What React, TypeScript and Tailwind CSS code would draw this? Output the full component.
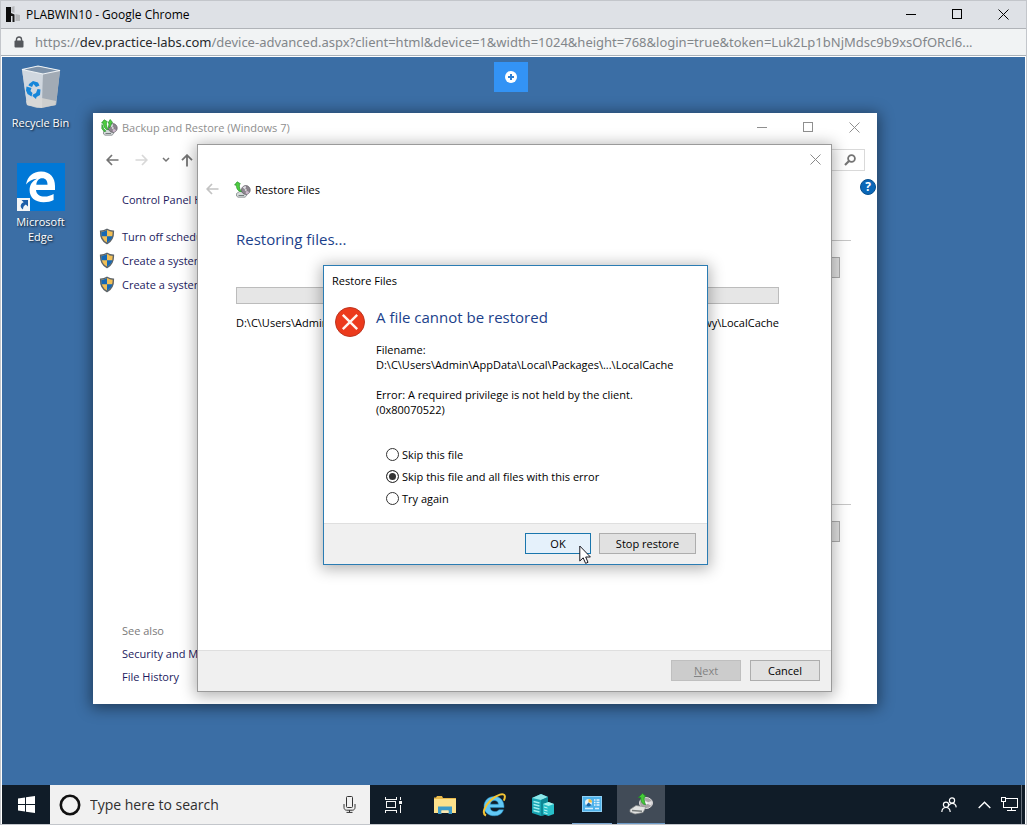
import React, { useState } from 'react';

type IconProps = { className?: string };

const MinimizeIcon = ({ className }: IconProps) => (
  <svg className={className} width="11" height="11" viewBox="0 0 11 11" stroke="currentColor" fill="none" shapeRendering="crispEdges">
    <path d="M0 5.5H10" />
  </svg>
);

const MaximizeIcon = ({ className }: IconProps) => (
  <svg className={className} width="11" height="11" viewBox="0 0 11 11" stroke="currentColor" fill="none" shapeRendering="crispEdges">
    <rect x="0.5" y="0.5" width="9" height="9" />
  </svg>
);

const CloseIcon = ({ className }: IconProps) => (
  <svg className={className} width="11" height="11" viewBox="0 0 11 11" stroke="currentColor" fill="none">
    <path d="M0.5 0.5L10.5 10.5M10.5 0.5L0.5 10.5" />
  </svg>
);

const ArrowLeft = ({ className }: IconProps) => (
  <svg className={className} width="13" height="12" viewBox="0 0 13 12" stroke="currentColor" strokeWidth="1.7" fill="none">
    <path d="M12.5 6H1.5M6 1L1.2 6L6 11" />
  </svg>
);

const ShieldIcon = () => (
  <svg width="16" height="17" viewBox="0 0 16 17" className="shrink-0">
    <path d="M8 1.3C6 2.7 3.8 3.2 1.6 3.2C1.4 9 3 13 8 15.5C13 13 14.6 9 14.4 3.2C12.2 3.2 10 2.7 8 1.3Z" fill="#f2bf55" stroke="#5d6368" strokeWidth="1.4" />
    <path d="M8 2.1C6.2 3.3 4.2 3.8 2.3 3.9C2.2 5.5 2.3 6.9 2.6 8.3H8Z" fill="#1668b5" />
    <path d="M8 8.3V14.7C11.2 13 12.8 11.1 13.4 8.3Z" fill="#1668b5" />
  </svg>
);

// hard disk + disc with a green restore arrow on top
const BackupIcon = ({ double, className }: IconProps & { double?: boolean }) => (
  <svg className={className} width="17" height="17" viewBox="0 0 17 17">
    <path d="M2.5 12.5L5.5 10.5H13.5L12.5 14.8L11 16.2H4L2.5 15Z" fill="#d5dada" stroke="#81888a" strokeWidth="0.8" />
    <circle cx="11.8" cy="9" r="4.4" fill="#8d868f" stroke="#5d5961" strokeWidth="0.7" />
    <path d="M11.8 9L8.6 6.4A4.1 4.1 0 0 1 11.8 4.9Z" fill="#e2dfe8" />
    <path d="M11.8 9L15.2 11.2A4.1 4.1 0 0 1 11.8 13.1Z" fill="#cdb9cd" />
    <circle cx="11.8" cy="9" r="1.2" fill="#fff" stroke="#686268" strokeWidth="0.5" />
    <path d="M4.5 14.5H10" stroke="#737b7c" />
    <path d="M0.6 4L3.2 0.8L6.4 2.8L5.4 3.6C5.3 6.4 5.8 8.6 7.4 10.6C4.4 10.6 2.5 8 2.3 4.2Z" fill="#4fcd3f" stroke="#23922b" strokeWidth="0.7" />
    {double && (
      <path d="M7 4L9.2 0.5L11.6 3.5L10.5 3.8C10.4 5.6 9.6 7.4 8.2 8.8C7.4 8 7.8 6.2 8 4.2ZM1 5.5L2.8 9.8L4.8 12.3L3.2 12.6L0.8 9.5Z" fill="#4fcd3f" stroke="#23922b" strokeWidth="0.7" />
    )}
  </svg>
);

const RecycleBinIcon = () => (
  <svg width="40" height="44" viewBox="0 0 40 44">
    <path d="M1 4.5L18 1L39 5.5L35 40L16 43L6 40Z" fill="#b7c1cb" />
    <path d="M1 4.5L22 9L21 43L6 40Z" fill="#d0d7df" />
    <path d="M22 9L39 5.5L35 40L21 43Z" fill="#a2abb5" />
    <path d="M1 4.5L17 1L39 5.5L22 9Z" fill="#7d92a9" stroke="#eef2f5" strokeWidth="1.2" />
    <path d="M5 36L16 32L35 36L34.5 40L20 43L6 40Z" fill="#dad8d5" opacity="0.8" />
    <g fill="#1686d9">
      <path d="M8 19L12 16L17 17.5L18.5 20.5L15 22L12.5 19L11 22L7.5 20.5Z" />
      <path d="M5.5 21.5L10.5 23L9.5 26L11.5 28L10.5 31.5L6.5 29L5 25.5Z" />
      <path d="M12 29.5L15 28L16.5 24L19.5 24.5L19 30L15.5 32L15 34L11.5 31Z" />
    </g>
  </svg>
);

const EdgeIcon = () => (
  <svg width="48" height="48" viewBox="0 0 48 48">
    <rect width="48" height="48" fill="#0078d7" />
    <path d="M9 21.5C10.5 13.5 16 8.5 24 8.5C33.5 8.5 38 15 38 23V27H19C19.3 31.6 23 33.6 27.4 33.6C31 33.6 34 32.5 36.6 31V37C33.8 38.5 30.6 39.2 26.6 39.2C18 39.2 12.6 34.5 12.6 27C12.6 22 15.3 18 20 15.8C15.4 16.2 11.6 18.3 9 21.5ZM19.3 21.7H30.5C30.5 17.6 28.8 15.2 25.2 15.2C21.8 15.2 19.7 17.8 19.3 21.7Z" fill="#fff" />
    <rect x="0" y="35" width="13" height="13" fill="#f3f5f7" />
    <path d="M4.5 37H11V43.5L8.8 41.4C6.8 42.6 6 44 6 46.5C2.4 43.8 3.4 40.6 6.7 39.2Z" fill="#1d5ea8" />
  </svg>
);

function WindowButtons() {
  return (
    <div className="flex self-stretch">
      <button aria-label="Minimize" className="w-[46px] flex items-center justify-center"><MinimizeIcon /></button>
      <button aria-label="Maximize" className="w-[46px] flex items-center justify-center"><MaximizeIcon /></button>
      <button aria-label="Close" className="w-[46px] flex items-center justify-center"><CloseIcon /></button>
    </div>
  );
}

const tasks = ['Turn off schedule', 'Create a system image', 'Create a system repair disc'];

function BackupWindow() {
  return (
    <section className="absolute left-[91px] top-[56px] w-[784px] h-[591px] bg-white flex flex-col shadow-[0_2px_14px_2px_rgba(0,0,0,0.45)]">
      <div className="h-7 flex items-center pl-2 text-[#8f8f8f]">
        <BackupIcon double />
        <span className="ml-1 flex-1">Backup and Restore (Windows 7)</span>
        <WindowButtons />
      </div>
      <div className="h-[38px] flex items-center pl-[13px] pr-3 text-[#747474]">
        <button aria-label="Back"><ArrowLeft /></button>
        <button aria-label="Forward" className="ml-4 text-[#d8d8d8]"><ArrowLeft className="rotate-180" /></button>
        <button aria-label="Recent locations" className="ml-3.5">
          <svg width="8" height="6" viewBox="0 0 8 6" fill="none" stroke="currentColor" strokeWidth="1.5"><path d="M1 1L4 4L7 1" /></svg>
        </button>
        <button aria-label="Up" className="ml-[11px]">
          <svg width="12" height="13" viewBox="0 0 12 13" fill="none" stroke="currentColor" strokeWidth="1.8"><path d="M6 12.5V1.5M1 6.2L6 1.2L11 6.2" /></svg>
        </button>
        <div className="ml-auto w-[180px] h-[22px] border border-[#d9d9d9] flex items-center justify-end pr-2">
          <svg width="12" height="12" viewBox="0 0 12 12" fill="none" stroke="currentColor"><circle cx="7.5" cy="4.5" r="3.4" strokeWidth="1.8" /><path d="M5 7L1 11" strokeWidth="2.2" /></svg>
        </div>
      </div>
      <div className="flex-1 flex">
        <nav className="w-[200px] pt-[9px] pb-4 flex flex-col text-[#1c1a5e] whitespace-nowrap">
          <a href="#home" className="pl-[29px] leading-6">Control Panel Home</a>
          <ul className="mt-3">
            {tasks.map((task) => (
              <li key={task} className="h-6 flex items-center pl-1.5">
                <ShieldIcon />
                <a href="#task" className="ml-[7px]">{task}</a>
              </li>
            ))}
          </ul>
          <div className="mt-auto pl-[29px] leading-[23px] flex flex-col">
            <span className="text-[#7a7a7a]">See also</span>
            <a href="#security">Security and Maintenance</a>
            <a href="#history">File History</a>
          </div>
        </nav>
        <div className="flex-1 flex flex-col">
          <button aria-label="Help" className="self-end mr-px w-4 h-4 rounded-full bg-[#0a67b8] border border-[#08508f] text-white text-xs font-bold flex items-center justify-center">
            ?
          </button>
          <div className="mt-[45px] mr-[26px] border-t border-[#c6c6c6]" />
          <button aria-label="Back up now" className="self-end mt-4 mr-[37px] w-[100px] h-[21px] bg-[#e1e1e1] border border-[#adadad]" />
          <div className="mt-[226px] mr-[26px] border-t border-[#c6c6c6]" />
          <button aria-label="Restore my files" className="self-end mt-4 mr-[37px] w-[100px] h-[21px] bg-[#e1e1e1] border border-[#adadad]" />
        </div>
      </div>
    </section>
  );
}

function RestoreWindow() {
  return (
    <section className="absolute left-[195px] top-[87px] w-[635px] h-[548px] bg-white border border-[#9a9a9a] flex flex-col shadow-[0_2px_14px_2px_rgba(0,0,0,0.3)]">
      <div className="flex justify-end h-7">
        <button aria-label="Close" className="w-[31px] flex items-center justify-center text-[#8a8a8a]"><CloseIcon /></button>
      </div>
      <div className="h-8 flex items-center pl-2">
        <button aria-label="Back" className="text-[#c3c3c3]"><ArrowLeft /></button>
        <BackupIcon className="ml-[15px]" />
        <span className="ml-1">Restore Files</span>
      </div>
      <div className="flex-1 pl-[38px] pr-[52px] pt-[22px]">
        <h1 className="text-[15px] leading-6 text-[#1b3f8b]">Restoring files...</h1>
        <div className="mt-9 h-[17px] bg-[#e6e6e6] border border-[#bcbcbc]" role="progressbar" />
        <p className="mt-[11px] flex justify-between whitespace-nowrap">
          <span>D:\C\Users\Admin\AppData</span>
          <span>cw5n1h2txyewy\LocalCache</span>
        </p>
      </div>
      <div className="h-[41px] pb-0.5 bg-[#f0f0f0] border-t border-[#dfdfdf] flex items-center justify-end gap-[9px] pr-[11px]">
        <button disabled className="w-[70px] h-[21px] bg-[#cccccc] border border-[#bfbfbf] text-[#838383]"><u>N</u>ext</button>
        <button className="w-[70px] h-[21px] bg-[#e1e1e1] border border-[#adadad]">Cancel</button>
      </div>
    </section>
  );
}

const options = [
  { id: 'skip', label: 'Skip this file' },
  { id: 'skip-all', label: 'Skip this file and all files with this error' },
  { id: 'retry', label: 'Try again' },
];

function ErrorDialog() {
  const [choice, setChoice] = useState('skip-all');

  return (
    <section className="absolute left-[321px] top-[208px] w-[385px] h-[300px] bg-white border border-[#2b7cb3] flex flex-col shadow-[0_2px_14px_2px_rgba(0,0,0,0.3)]">
      <div className="pl-2 h-7 flex items-center">Restore Files</div>
      <div className="flex-1 flex pl-[11px]">
        <svg width="30" height="30" viewBox="0 0 30 30" className="mt-[13px] shrink-0">
          <circle cx="15" cy="15" r="14.5" fill="#ec3a1c" stroke="#bd3520" />
          <path d="M7.8 7.8L22.2 22.2M22.2 7.8L7.8 22.2" stroke="#fff4ef" strokeWidth="2.4" />
        </svg>
        <div className="ml-[11px] pt-[11px]">
          <h2 className="text-[15px] leading-6 text-[#1b3f8b]">A file cannot be restored</h2>
          <p className="mt-[13px] leading-[15px]">
            Filename:<br />
            D:\C\Users\Admin\AppData\Local\Packages\...\LocalCache
          </p>
          <p className="mt-[15px] leading-[15px]">
            Error: A required privilege is not held by the client.<br />
            (0x80070522)
          </p>
          <div className="mt-[26px] ml-2.5 flex flex-col">
            {options.map((option) => (
              <label key={option.id} className="h-[22px] flex items-center gap-[3px]">
                <input
                  type="radio"
                  name="action"
                  checked={choice === option.id}
                  onChange={() => setChoice(option.id)}
                  className="appearance-none w-[13px] h-[13px] rounded-full border border-[#333333] bg-white checked:bg-[#333333] checked:shadow-[inset_0_0_0_2px_white]"
                />
                {option.label}
              </label>
            ))}
          </div>
        </div>
      </div>
      <div className="h-[41px] pb-0.5 bg-[#f0f0f0] border-t border-[#dfdfdf] flex items-center justify-end gap-2 pr-[11px]">
        <button className="w-[66px] h-[21px] bg-[#e5f1fb] border border-[#1a76ad]">OK</button>
        <button className="w-[97px] h-[21px] bg-[#e1e1e1] border border-[#adadad]">Stop restore</button>
      </div>
      <svg width="13" height="20" viewBox="0 0 13 20" className="absolute left-[255px] top-[279px]">
        <path d="M0.8 1V16L4.2 12.8L6.6 18.4L9 17.3L6.7 12H11.4Z" fill="#fff" stroke="#16161f" />
      </svg>
    </section>
  );
}

function Taskbar() {
  return (
    <footer className="h-[39px] shrink-0 bg-[#101c28] flex items-stretch">
      <button aria-label="Start" className="w-12 flex items-center justify-center">
        <svg width="17" height="17" viewBox="0 0 17 17" fill="#fff">
          <path d="M0 2.4L7 1.4V8H0ZM8 1.2L17 0V8H8ZM0 9H7V15.6L0 14.6ZM8 9H17V17L8 15.8Z" />
        </svg>
      </button>
      <label className="w-80 bg-[#f1f1f1] flex items-center pl-2 pr-3.5">
        <svg width="24" height="24" viewBox="0 0 24 24" className="shrink-0">
          <circle cx="12" cy="12" r="9.2" fill="none" stroke="#101010" strokeWidth="2.6" />
        </svg>
        <input
          type="text"
          aria-label="Search"
          placeholder="Type here to search"
          className="ml-2 flex-1 min-w-0 bg-transparent text-sm outline-none placeholder:text-[#2f2f2f]"
        />
        <svg width="13" height="17" viewBox="0 0 13 17" fill="none" stroke="#333">
          <rect x="3.5" y="0.5" width="6" height="11" rx="1" />
          <path d="M1 8V11.5C1 13 2 14.2 3.6 14.2H9.4C11 14.2 12 13 12 11.5V8M6.5 14.2V16.4M3.5 16.4H9.5" />
        </svg>
      </label>
      <button aria-label="Task View" className="w-[51px] pr-1 flex items-center justify-center">
        <svg width="17" height="16" viewBox="0 0 17 16" fill="none" stroke="#f4f4f4" shapeRendering="crispEdges">
          <path d="M0.5 0V2.5H11.5V0M0.5 16V13.5H11.5V16M15.5 0V3M15.5 8V16" />
          <rect x="1.5" y="4.5" width="9" height="6" />
          <rect x="14" y="4" width="3" height="3" fill="#f4f4f4" stroke="none" />
        </svg>
      </button>
      <button aria-label="File Explorer" className="w-12 flex items-center justify-center">
        <svg width="22" height="18" viewBox="0 0 22 18">
          <path d="M0 1.5H2L3 0H8L9 2H22V17H0Z" fill="#e9b94a" />
          <path d="M0 3H22V17H0Z" fill="#fde18b" />
          <path d="M4 18V10.5H18V18H14.5V14.5H7.5V18Z" fill="#3d9bc9" />
          <path d="M7.5 14.5H14.5V17H7.5Z" fill="#fbe9b4" />
        </svg>
      </button>
      <button aria-label="Internet Explorer" className="w-[49px] flex items-center justify-center">
        <svg width="24" height="24" viewBox="0 0 24 24">
          <path d="M2 13.5C2 7.5 6.5 3.5 12.3 3.5C18.5 3.5 22.3 8 22 14.6H8.2C8.4 17.3 10.2 18.6 12.8 18.6C15 18.6 16.2 17.8 16.8 16.8H21.5C20 20.8 17 22.8 12.6 22.8C6.2 22.8 2 19.2 2 13.5ZM8.4 11.2H16.4C16.2 8.8 14.8 7.5 12.4 7.5C10.2 7.5 8.7 8.8 8.4 11.2Z" fill="#62c8f5" stroke="#2796cf" strokeWidth="0.5" />
          <path d="M4 22.5C-0.5 20.5 2.5 13 9 7C15 1.5 22 -0.5 22.8 3C23.1 4.5 22.6 6 21.8 7.6" fill="none" stroke="#f3c434" strokeWidth="2" />
        </svg>
      </button>
      <button aria-label="Server Manager" className="w-[49px] flex items-center justify-center">
        <svg width="22" height="22" viewBox="0 0 22 22">
          <path d="M0 4L9 0L16 3V20L9 22L0 19Z" fill="#18a5b3" />
          <path d="M0 4L9 0L16 3L9 6Z" fill="#8fe8ea" />
          <path d="M9 6L16 3V20L9 22Z" fill="#0d8795" />
          <path d="M1.5 7.5L7.5 9M1.5 10.5L7.5 12M1.5 13.5L7.5 15M1.5 16.5L7.5 18" stroke="#9ff1f0" strokeWidth="1.5" />
          <path d="M11 10L16.5 8L22 10V20L16.5 22L11 20Z" fill="#28bfc9" />
          <path d="M11 10L16.5 8L22 10L16.5 12Z" fill="#a4f2ef" />
          <path d="M12 13L15.5 14M12 16L15.5 17M12 18.6L15.5 19.6" stroke="#c2f7f5" />
        </svg>
      </button>
      <button aria-label="Control Panel" className="w-[50px] px-[5px] flex">
        <span className="flex-1 h-full flex items-center justify-center border-b border-[#7ba7d2]">
          <svg width="20" height="16" viewBox="0 0 20 16">
            <rect x="0.5" y="0.5" width="19" height="15" fill="#4fb2ea" stroke="#8fd0f5" />
            <circle cx="6.5" cy="6.5" r="3.5" fill="#e6f4fb" />
            <path d="M6.5 6.5V3A3.5 3.5 0 0 1 10 6.5Z" fill="#f4bc45" />
            <path d="M6.5 6.5L9.5 9A4 4 0 0 1 4 9.2Z" fill="#1763a5" />
            <path d="M12 4H13.5M12 6.5H13.5M12 9H13.5M14.5 4H17.5M14.5 6.5H17.5M14.5 9H17.5" stroke="#e6f5ff" strokeWidth="1.3" />
            <path d="M3 12.5H11M13 12.5H17" stroke="#d7effc" strokeWidth="1.5" />
          </svg>
        </span>
      </button>
      <button aria-label="Backup and Restore" className="w-12 bg-[#414b57] border-b border-[#6d9bc8] flex items-center justify-center">
        <svg width="24" height="24" viewBox="0 0 24 24">
          <ellipse cx="17" cy="11" rx="6.5" ry="5.5" fill="#a9a5a7" stroke="#dad9da" />
          <path d="M17 11L22.6 9A6 5 0 0 1 22 13.6ZM17 11L12 8A6 5 0 0 1 15.5 6Z" fill="#e4e2e4" />
          <ellipse cx="17" cy="11" rx="1.8" ry="1.4" fill="#f6f6f6" />
          <path d="M1 17.5L7 13.5L17 15L14 20.5L6 22L1 20Z" fill="#e2e3e2" stroke="#8a8d8d" strokeWidth="0.7" />
          <path d="M3 18.6L13 19.2" stroke="#777c7c" strokeWidth="1.5" />
          <path d="M9.5 5.5L13.5 1.5L17 4.5L15.2 5C15 8 15.4 10.5 16.6 12.6C13.4 12.4 11.6 9.6 11.8 5.5Z" fill="#46cb38" stroke="#258f2a" strokeWidth="0.8" />
        </svg>
      </button>
      <div className="ml-auto flex items-center text-white">
        <button aria-label="People">
          <svg width="16" height="16" viewBox="0 0 16 16" fill="none" stroke="currentColor" strokeWidth="1.2">
            <circle cx="11" cy="3.5" r="2.6" />
            <circle cx="5" cy="7.7" r="2.6" />
            <path d="M7.8 8.6C8.5 7.2 9.6 6.4 11 6.4C13.4 6.4 15 8 15.2 10.4M0.8 15C1 12.2 2.8 10.5 5 10.5C7.2 10.5 9 12.2 9.2 15" />
          </svg>
        </button>
        <button aria-label="Show hidden icons" className="ml-[21px]">
          <svg width="13" height="8" viewBox="0 0 13 8" fill="none" stroke="currentColor" strokeWidth="1.4"><path d="M0.7 7L6.5 1.2L12.3 7" /></svg>
        </button>
        <button aria-label="Network" className="ml-2.5">
          <svg width="17" height="15" viewBox="0 0 17 15" fill="none" stroke="currentColor" shapeRendering="crispEdges">
            <path d="M4.5 1.5H16.5V10.5H4.5M10.5 10.5V13.5M6 13.5H15M2.5 5V10.5H5" />
            <rect x="0.5" y="0.5" width="4" height="4" fill="#101c28" />
          </svg>
        </button>
        <button aria-label="Show desktop" className="ml-[3px] w-1 h-[39px] border-l border-[#66707a]" />
      </div>
    </footer>
  );
}

export default function App() {
  return (
    <div className="min-h-screen flex flex-col bg-white border border-[#c3c6cb] font-['Open_Sans','Noto_Sans',sans-serif] text-[11px] leading-[15px] text-black select-none">
      {/* Browser title bar */}
      <header className="h-7 shrink-0 bg-[#dee1e6] border-b border-[#b0b3b8] flex items-center pl-[5px] text-xs">
        <svg width="15" height="17" viewBox="0 0 15 17">
          <path d="M0 1H5V16H0Z" fill="#0c0c0c" />
          <path d="M5 7L8.5 8.5V16H6.5V10H5Z" fill="#1c1c1c" />
          <path d="M5.5 1L8.5 0V7L5.5 5.5ZM9.5 8L14 9V15H9.5Z" fill="#b6b8bb" />
        </svg>
        <span className="ml-[5px] flex-1">PLABWIN10 - Google Chrome</span>
        <WindowButtons />
      </header>

      {/* Address bar */}
      <div className="h-[27px] shrink-0 bg-[#f1f3f4] border-b border-[#a9b1b8] flex items-center pl-[13px] pr-4">
        <svg width="10" height="12" viewBox="0 0 10 12" className="shrink-0">
          <rect x="0.5" y="4.5" width="9" height="7" rx="1" fill="#55585c" />
          <path d="M2.5 5V3.2C2.5 0.2 7.5 0.2 7.5 3.2V5" fill="none" stroke="#55585c" strokeWidth="1.4" />
        </svg>
        <span className="ml-[11px] flex-1 min-w-0 whitespace-nowrap font-['Noto_Sans','Open_Sans',sans-serif] text-[13px] text-[#82868a]">
          https://<span className="text-[#26282b]">dev.practice-labs.com</span>/device-advanced.aspx?client=html&amp;device=1&amp;width=1024&amp;height=768&amp;login=true&amp;token=Luk2Lp1bNjMdsc9b9xsOfORcl6...
        </span>
      </div>

      {/* Remote desktop */}
      <div className="flex-1 flex flex-col border-x border-t border-white">
        <main className="relative flex-1 min-h-[660px] overflow-hidden bg-[#3b6ea5]">
          <button aria-label="Open toolbar" className="absolute left-[492px] top-[5px] w-[34px] h-[30px] bg-[#3393f5] flex items-center justify-center">
            <svg width="12" height="12" viewBox="0 0 12 12">
              <circle cx="6" cy="6" r="6" fill="#fff" />
              <path d="M6 3V9M3 6H9" stroke="#2d7fd3" strokeWidth="2" />
            </svg>
          </button>

          <div className="w-[77px] pt-2 flex flex-col items-center text-center text-white [text-shadow:1px_1px_2px_rgba(0,0,0,0.8)]">
            <RecycleBinIcon />
            <span className="mt-1.5">Recycle Bin</span>
            <span className="mt-[33px]"><EdgeIcon /></span>
            <span className="mt-[3px] w-16">Microsoft Edge</span>
          </div>

          <BackupWindow />
          <RestoreWindow />
          <ErrorDialog />
        </main>
        <Taskbar />
      </div>
    </div>
  );
}
